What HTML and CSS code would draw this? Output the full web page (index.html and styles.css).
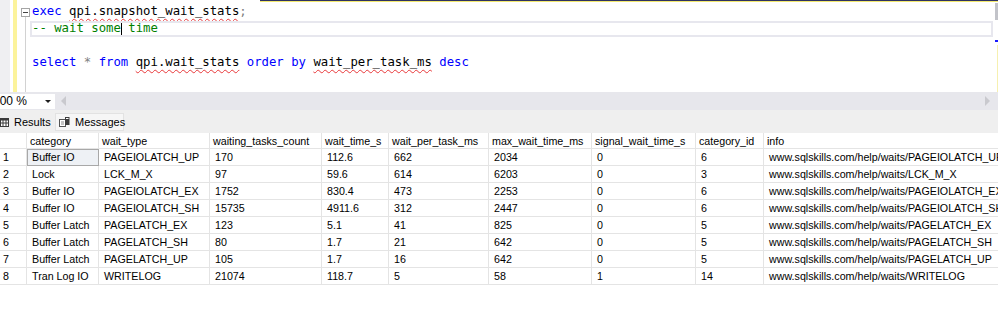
FILE: index.html
```html
<!DOCTYPE html>
<html>
<head>
<meta charset="utf-8">
<link rel="stylesheet" href="styles.css">
</head>
<body>
<div class="editor">
  <div class="gutter"></div>
  <div class="gap"></div>
  <div class="changed"></div>
  <div class="outline"><div class="fold"></div><div class="fold-line"></div></div>
  <div class="code">
    <div class="line"><span class="kw">exec</span> <span class="err">qpi.snapshot_wait_stats</span><span class="op">;</span></div>
    <div class="line current"><span class="cm">-- wait some<span class="caret"></span> time</span></div>
    <div class="line"> </div>
    <div class="line"><span class="kw">select</span> <span class="op">*</span> <span class="kw">from</span> <span class="err">qpi.wait_stats</span> <span class="kw">order</span> <span class="kw">by</span> <span class="err">wait_per_task_ms</span> <span class="kw">desc</span></div>
  </div>
  <div class="vscroll"><div class="thumb"></div><div class="mark"></div><div class="yline"></div></div>
</div>
<div class="toolbar">
  <div class="zoom"><span class="zoom-text">100 %</span><span class="drop"></span></div>
  <span class="arrow-left"></span>
  <span class="arrow-right"></span>
</div>
<div class="tabs">
  <div class="tab tab-results">
    <svg class="icon" width="9" height="9" viewBox="0 0 9 9"><rect x="0.5" y="0.5" width="8" height="8" fill="#fff" stroke="#3c3c3c"/><rect x="0" y="0" width="9" height="2.5" fill="#3c3c3c"/><line x1="0" y1="5" x2="9" y2="5" stroke="#3c3c3c"/><line x1="3" y1="0" x2="3" y2="9" stroke="#3c3c3c"/><line x1="6" y1="0" x2="6" y2="9" stroke="#3c3c3c"/></svg>
    <span>Results</span>
  </div>
  <div class="tab tab-messages">
    <svg class="icon" width="11" height="10" viewBox="0 0 11 10"><rect x="0.5" y="2.5" width="6" height="7" fill="#fff" stroke="#555"/><line x1="2" y1="5" x2="5" y2="5" stroke="#888"/><line x1="2" y1="7" x2="5" y2="7" stroke="#888"/><rect x="6" y="0" width="4.5" height="8" fill="#3c3c3c"/><rect x="7" y="1" width="2.5" height="1" fill="#fff"/></svg>
    <span>Messages</span>
  </div>
</div>
<div class="grid">
  <div class="row head"><div class="c num"></div><div class="c">category</div><div class="c">wait_type</div><div class="c">waiting_tasks_count</div><div class="c">wait_time_s</div><div class="c">wait_per_task_ms</div><div class="c">max_wait_time_ms</div><div class="c">signal_wait_time_s</div><div class="c">category_id</div><div class="c">info</div></div>
  <div class="row"><div class="c num">1</div><div class="c sel">Buffer IO</div><div class="c">PAGEIOLATCH_UP</div><div class="c">170</div><div class="c">112.6</div><div class="c">662</div><div class="c">2034</div><div class="c">0</div><div class="c">6</div><div class="c">www.sqlskills.com/help/waits/PAGEIOLATCH_UP</div></div>
  <div class="row"><div class="c num">2</div><div class="c">Lock</div><div class="c">LCK_M_X</div><div class="c">97</div><div class="c">59.6</div><div class="c">614</div><div class="c">6203</div><div class="c">0</div><div class="c">3</div><div class="c">www.sqlskills.com/help/waits/LCK_M_X</div></div>
  <div class="row"><div class="c num">3</div><div class="c">Buffer IO</div><div class="c">PAGEIOLATCH_EX</div><div class="c">1752</div><div class="c">830.4</div><div class="c">473</div><div class="c">2253</div><div class="c">0</div><div class="c">6</div><div class="c">www.sqlskills.com/help/waits/PAGEIOLATCH_EX</div></div>
  <div class="row"><div class="c num">4</div><div class="c">Buffer IO</div><div class="c">PAGEIOLATCH_SH</div><div class="c">15735</div><div class="c">4911.6</div><div class="c">312</div><div class="c">2447</div><div class="c">0</div><div class="c">6</div><div class="c">www.sqlskills.com/help/waits/PAGEIOLATCH_SH</div></div>
  <div class="row"><div class="c num">5</div><div class="c">Buffer Latch</div><div class="c">PAGELATCH_EX</div><div class="c">123</div><div class="c">5.1</div><div class="c">41</div><div class="c">825</div><div class="c">0</div><div class="c">5</div><div class="c">www.sqlskills.com/help/waits/PAGELATCH_EX</div></div>
  <div class="row"><div class="c num">6</div><div class="c">Buffer Latch</div><div class="c">PAGELATCH_SH</div><div class="c">80</div><div class="c">1.7</div><div class="c">21</div><div class="c">642</div><div class="c">0</div><div class="c">5</div><div class="c">www.sqlskills.com/help/waits/PAGELATCH_SH</div></div>
  <div class="row"><div class="c num">7</div><div class="c">Buffer Latch</div><div class="c">PAGELATCH_UP</div><div class="c">105</div><div class="c">1.7</div><div class="c">16</div><div class="c">642</div><div class="c">0</div><div class="c">5</div><div class="c">www.sqlskills.com/help/waits/PAGELATCH_UP</div></div>
  <div class="row"><div class="c num">8</div><div class="c">Tran Log IO</div><div class="c">WRITELOG</div><div class="c">21074</div><div class="c">118.7</div><div class="c">5</div><div class="c">58</div><div class="c">1</div><div class="c">14</div><div class="c">www.sqlskills.com/help/waits/WRITELOG</div></div>
</div>
</body>
</html>
```
FILE: styles.css
```css
* { box-sizing: border-box; }
html, body { margin: 0; padding: 0; }
body {
  width: 998px;
  height: 310px;
  overflow: hidden;
  background: #fff;
  color: #000;
  font-family: "Liberation Sans", Arial, sans-serif;
}

/* editor */
.editor {
  position: relative;
  display: flex;
  height: 92px;
  background: #fff;
}
.editor::before {
  content: "";
  position: absolute;
  left: 260px;
  right: 0;
  top: 0;
  height: 1px;
  background: #2d3160;
}
.editor::after {
  content: "";
  position: absolute;
  left: 260px;
  right: 0;
  top: 1px;
  height: 1px;
  background: #f2e86e;
}
.gutter { width: 10px; background: #efeff2; }
.gap { width: 3px; }
.changed { width: 4px; background: #fcf39b; }
.outline { width: 15px; position: relative; }
.fold {
  position: absolute;
  left: 4px;
  top: 8px;
  width: 9px;
  height: 9px;
  border: 1px solid #a5a5a5;
  background: #fff;
  z-index: 1;
}
.fold::after {
  content: "";
  position: absolute;
  left: 1px;
  right: 1px;
  top: 3px;
  height: 1px;
  background: #444;
}
.fold-line {
  position: absolute;
  left: 8px;
  top: 17px;
  bottom: 0;
  width: 1px;
  background: #d2d2d2;
}
.code {
  flex: 1;
  padding-top: 3px;
  font-family: "DejaVu Sans Mono", "Liberation Mono", monospace;
  font-size: 12.3px;
  color: #000;
}
.line {
  position: relative;
  height: 17px;
  line-height: 17px;
  white-space: pre;
}
.line.current::before {
  content: "";
  position: absolute;
  left: -2px;
  right: 0;
  top: 1px;
  bottom: 0;
  border: 2px solid #e7e7ee;
}
.kw { color: #0000ff; }
.op { color: #808080; }
.cm { color: #008000; }
.err {
  text-decoration: underline wavy #e8383a;
  text-decoration-thickness: 1px;
  text-underline-offset: 3px;
}
.caret {
  display: inline-block;
  width: 0;
  height: 14px;
  border-left: 1px solid #000;
  vertical-align: -3px;
  margin-right: -1px;
}
.vscroll { width: 5px; position: relative; }
.thumb {
  position: absolute;
  left: 2px;
  top: 3px;
  width: 3px;
  height: 17px;
  background: #c2c3c9;
}
.mark {
  position: absolute;
  left: 2px;
  top: 40px;
  width: 3px;
  height: 2px;
  background: #1a1aff;
}
.yline {
  position: absolute;
  left: 4px;
  top: 45px;
  bottom: 0;
  width: 1px;
  background: #f6f0b0;
}

/* toolbar */
.toolbar {
  height: 18px;
  background: #e7e7ec;
  display: flex;
  align-items: center;
}
.zoom {
  width: 55px;
  height: 15px;
  background: #fff;
  display: flex;
  align-items: center;
  justify-content: space-between;
  padding-right: 4px;
  overflow: hidden;
  font-size: 12px;
}
.zoom-text { margin-left: -7px; white-space: pre; }
.drop {
  width: 0;
  height: 0;
  border-left: 3px solid transparent;
  border-right: 3px solid transparent;
  border-top: 3px solid #1e1e1e;
}
.arrow-left {
  margin-left: 6px;
  width: 0;
  height: 0;
  border-top: 5px solid transparent;
  border-bottom: 5px solid transparent;
  border-right: 5px solid #c9c9ce;
}
.arrow-right {
  margin-left: auto;
  margin-right: 8px;
  width: 0;
  height: 0;
  border-top: 5px solid transparent;
  border-bottom: 5px solid transparent;
  border-left: 5px solid #c9c9ce;
}

/* tabs */
.tabs {
  height: 23px;
  background: #efefef;
  display: flex;
  align-items: stretch;
  padding-top: 3px;
  padding-bottom: 2px;
  font-size: 11px;
}
.tab {
  display: flex;
  align-items: center;
  gap: 5px;
}
.tab-results { width: 55px; padding-left: 0; }
.tab-messages {
  width: 69px;
  padding-left: 3px;
  background: #f6f6f6;
  border: 1px solid #e2e2e2;
}
.icon { flex: none; }

/* grid */
.grid { font-size: 10.7px; }
.row {
  display: grid;
  grid-template-columns: 27px 72px 111px 112px 67px 100px 103px 104px 68px 320px;
  height: 17px;
}
.c {
  height: 17px;
  line-height: 16px;
  padding-left: 5px;
  border-right: 1px solid #e4e4e4;
  border-bottom: 1px solid #e4e4e4;
  white-space: nowrap;
  overflow: hidden;
}
.c.num { padding-left: 3px; }
.head { height: 16px; }
.head .c {
  height: 16px;
  line-height: 14px;
  padding-top: 1px;
  padding-left: 3px;
}
.c.sel {
  background: #eef1f5;
  outline: 1px solid #a8a8a8;
  outline-offset: -1px;
}
```
